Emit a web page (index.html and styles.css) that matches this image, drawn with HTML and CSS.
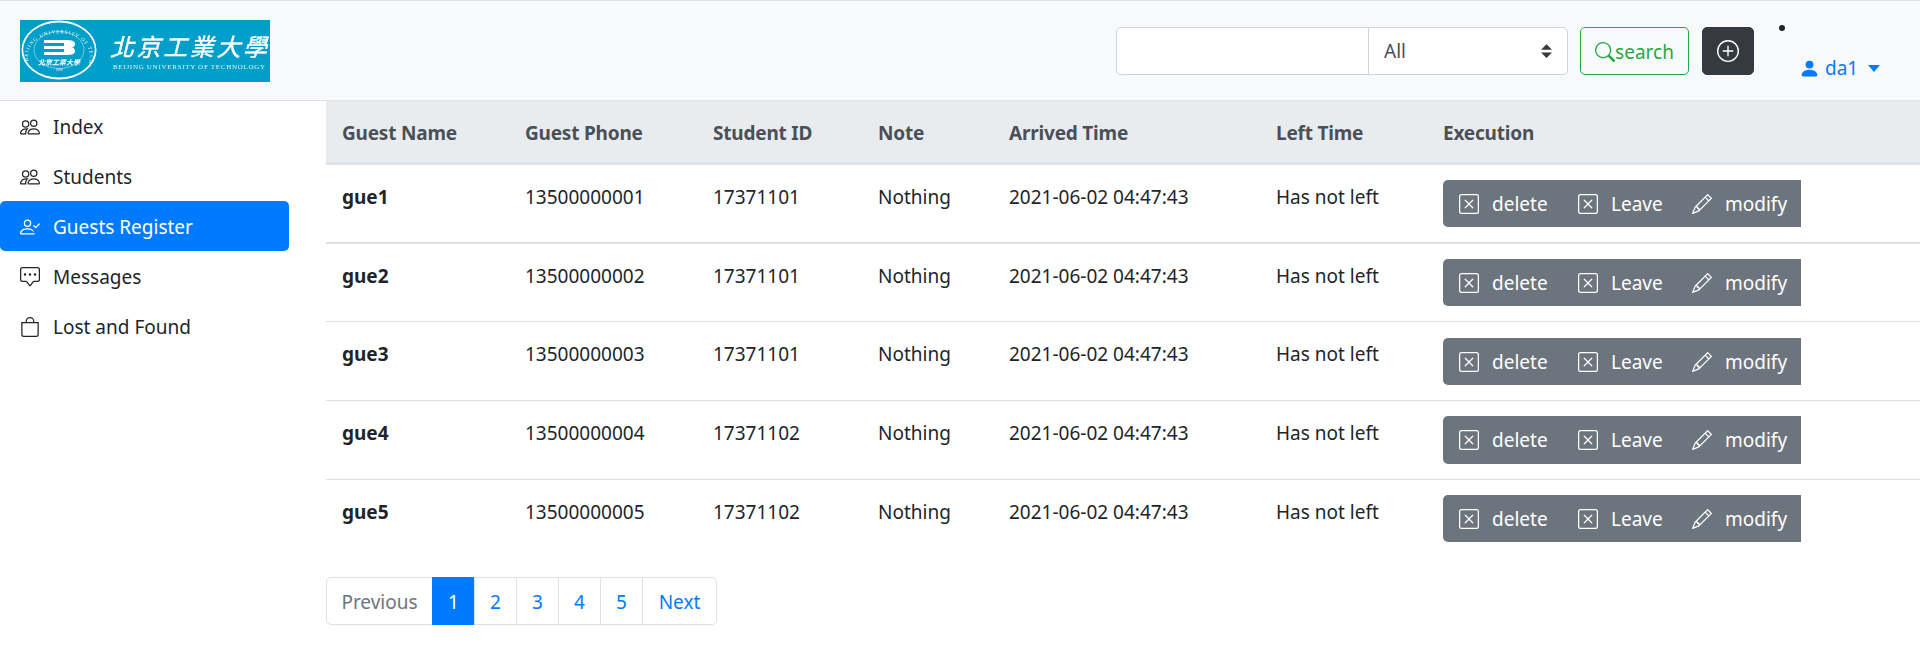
FILE: index.html
```html
<!DOCTYPE html>
<html lang="en">
<head>
<meta charset="utf-8">
<title>Guests Register</title>
<link rel="stylesheet" href="styles.css">
</head>
<body>
<svg class="sprite" aria-hidden="true">
  <symbol id="i-people" viewBox="0 0 16 16"><path d="M15 14s1 0 1-1-1-4-5-4-5 3-5 4 1 1 1 1h8zm-7.978-1A.261.261 0 0 1 7 12.996c.001-.264.167-1.03.76-1.72C8.312 10.629 9.282 10 11 10c1.717 0 2.687.63 3.24 1.276.593.69.758 1.457.76 1.72l-.008.002a.274.274 0 0 1-.014.002H7.022zM11 7a2 2 0 1 0 0-4 2 2 0 0 0 0 4zm3-2a3 3 0 1 1-6 0 3 3 0 0 1 6 0zM6.936 9.28a5.88 5.88 0 0 0-1.23-.247A7.35 7.35 0 0 0 5 9c-4 0-5 3-5 4 0 .667.333 1 1 1h4.216A2.238 2.238 0 0 1 5 13c0-1.01.377-2.042 1.09-2.904.243-.294.526-.569.846-.816zM4.92 10A5.493 5.493 0 0 0 4 13H1c0-.26.164-1.03.76-1.724.545-.636 1.492-1.256 3.16-1.275zM1.5 5.5a3 3 0 1 1 6 0 3 3 0 0 1-6 0zm3-2a2 2 0 1 0 0 4 2 2 0 0 0 0-4z"/></symbol>
  <symbol id="i-check" viewBox="0 0 16 16"><path d="M6 8a3 3 0 1 0 0-6 3 3 0 0 0 0 6zm2-3a2 2 0 1 1-4 0 2 2 0 0 1 4 0zm4 8c0 1-1 1-1 1H1s-1 0-1-1 1-4 6-4 5 3 5 4zm-1-.004c-.001-.246-.154-.986-.832-1.664C9.516 10.68 8.289 10 6 10c-2.29 0-3.516.68-4.168 1.332-.678.678-.83 1.418-.832 1.664h10z"/><path d="M15.854 5.146a.5.5 0 0 1 0 .708l-3 3a.5.5 0 0 1-.708 0l-1.5-1.5a.5.5 0 0 1 .708-.708L12.5 7.793l2.646-2.647a.5.5 0 0 1 .708 0z"/></symbol>
  <symbol id="i-chat" viewBox="0 0 16 16"><path d="M14 1a1 1 0 0 1 1 1v8a1 1 0 0 1-1 1h-2.5a2 2 0 0 0-1.6.8L8 14.333 6.1 11.8a2 2 0 0 0-1.6-.8H2a1 1 0 0 1-1-1V2a1 1 0 0 1 1-1h12zM2 0a2 2 0 0 0-2 2v8a2 2 0 0 0 2 2h2.5a1 1 0 0 1 .8.4l1.9 2.533a1 1 0 0 0 1.6 0l1.9-2.533a1 1 0 0 1 .8-.4H14a2 2 0 0 0 2-2V2a2 2 0 0 0-2-2H2z"/><path d="M5 6a1 1 0 1 1-2 0 1 1 0 0 1 2 0zm4 0a1 1 0 1 1-2 0 1 1 0 0 1 2 0zm4 0a1 1 0 1 1-2 0 1 1 0 0 1 2 0z"/></symbol>
  <symbol id="i-bag" viewBox="0 0 16 16"><path d="M8 1a2.5 2.5 0 0 1 2.5 2.5V4h-5v-.5A2.5 2.5 0 0 1 8 1zm3.5 3v-.5a3.5 3.5 0 1 0-7 0V4H1v10a2 2 0 0 0 2 2h10a2 2 0 0 0 2-2V4h-3.5zM2 5h12v9a1 1 0 0 1-1 1H3a1 1 0 0 1-1-1V5z"/></symbol>
  <symbol id="i-x" viewBox="0 0 16 16"><path d="M14 1a1 1 0 0 1 1 1v12a1 1 0 0 1-1 1H2a1 1 0 0 1-1-1V2a1 1 0 0 1 1-1h12zM2 0a2 2 0 0 0-2 2v12a2 2 0 0 0 2 2h12a2 2 0 0 0 2-2V2a2 2 0 0 0-2-2H2z"/><path d="M4.646 4.646a.5.5 0 0 1 .708 0L8 7.293l2.646-2.647a.5.5 0 0 1 .708.708L8.707 8l2.647 2.646a.5.5 0 0 1-.708.708L8 8.707l-2.646 2.647a.5.5 0 0 1-.708-.708L7.293 8 4.646 5.354a.5.5 0 0 1 0-.708z"/></symbol>
  <symbol id="i-pencil" viewBox="0 0 16 16"><path d="M12.146.146a.5.5 0 0 1 .708 0l3 3a.5.5 0 0 1 0 .708l-10 10a.5.5 0 0 1-.168.11l-5 2a.5.5 0 0 1-.65-.65l2-5a.5.5 0 0 1 .11-.168l10-10zM11.207 2.5 13.5 4.793 14.793 3.5 12.5 1.207 11.207 2.5zm1.586 3L10.5 3.207 4 9.707V10h.5a.5.5 0 0 1 .5.5v.5h.5a.5.5 0 0 1 .5.5v.5h.293l6.5-6.5zm-9.761 5.175-.106.106-1.528 3.821 3.821-1.528.106-.106A.5.5 0 0 1 5 12.5V12h-.5a.5.5 0 0 1-.5-.5V11h-.5a.5.5 0 0 1-.468-.325z"/></symbol>
  <symbol id="i-search" viewBox="0 0 16 16"><path d="M11.742 10.344a6.5 6.5 0 1 0-1.397 1.398h-.001c.03.04.062.078.098.115l3.85 3.85a1 1 0 0 0 1.415-1.414l-3.85-3.85a1.007 1.007 0 0 0-.115-.1zM12 6.5a5.5 5.5 0 1 1-11 0 5.5 5.5 0 0 1 11 0z"/></symbol>
  <symbol id="i-plus" viewBox="0 0 16 16"><path d="M8 15A7 7 0 1 1 8 1a7 7 0 0 1 0 14zm0 1A8 8 0 1 0 8 0a8 8 0 0 0 0 16z"/><path d="M8 4a.5.5 0 0 1 .5.5v3h3a.5.5 0 0 1 0 1h-3v3a.5.5 0 0 1-1 0v-3h-3a.5.5 0 0 1 0-1h3v-3A.5.5 0 0 1 8 4z"/></symbol>
  <symbol id="i-person" viewBox="0 0 16 16"><path d="M3 14s-1 0-1-1 1-4 6-4 6 3 6 4-1 1-1 1H3zm5-6a3 3 0 1 0 0-6 3 3 0 0 0 0 6z"/></symbol>
</svg>

<header class="topbar">
  <svg class="logo" viewBox="0 0 250 62" role="img" aria-label="Beijing University of Technology">
    <rect width="250" height="62" fill="#009fc9"/>
    <g class="logo-art">
      <ellipse cx="39" cy="30" rx="37.500" ry="29.500" fill="#fff"/>
      <ellipse cx="39" cy="30" rx="35.800" ry="27.500" fill="#009fc9"/>
      <ellipse cx="39" cy="30" rx="25" ry="18.500" fill="none" stroke="#bfe7f2" stroke-width=".6"/>
      <path id="seal-arc" d="M9 42 A31 23 0 1 1 69 42" fill="none"/>
      <text class="logo-seal"><textPath href="#seal-arc" startOffset="1" textLength="124">BEIJING UNIVERSITY OF TECHNOLOGY</textPath></text>
      <path d="M24 20h23q8 0 8 3.500t-3 4q3 .5 3 4t-8 3.500H24v-3h20v-3H24v-3h20v-3H24z" fill="#fff"/>
      <text class="logo-seal-cn" x="18" y="45" textLength="42">北京工業大學</text>
      <text class="logo-year" x="39" y="51" text-anchor="middle">1960</text>
      <text class="logo-cn" x="90" y="36" textLength="157">北京工業大學</text>
      <text class="logo-en" x="93" y="49" textLength="152">BEIJING UNIVERSITY OF TECHNOLOGY</text>
    </g>
  </svg>
  <form class="search-form">
    <input class="search-input" type="text" aria-label="Search">
    <select class="search-select" aria-label="Filter"><option>All</option></select>
    <button class="btn-search" type="button"><svg class="icon"><use href="#i-search"/></svg>search</button>
    <button class="btn-add" type="button" aria-label="Add"><svg class="icon-add"><use href="#i-plus"/></svg></button>
  </form>
  <div class="user-menu">
    <span class="dot"></span>
    <a class="user-link" href="#"><svg class="icon-user"><use href="#i-person"/></svg>da1<span class="caret"></span></a>
  </div>
</header>

<div class="layout">
  <nav class="sidebar">
    <a class="nav-item" href="#"><svg class="icon"><use href="#i-people"/></svg>Index</a>
    <a class="nav-item" href="#"><svg class="icon"><use href="#i-people"/></svg>Students</a>
    <a class="nav-item active" href="#"><svg class="icon"><use href="#i-check"/></svg>Guests Register</a>
    <a class="nav-item" href="#"><svg class="icon"><use href="#i-chat"/></svg>Messages</a>
    <a class="nav-item" href="#"><svg class="icon"><use href="#i-bag"/></svg>Lost and Found</a>
  </nav>
  <main class="content">
    <table class="guests">
      <colgroup>
        <col class="c-name"><col class="c-phone"><col class="c-id"><col class="c-note"><col class="c-arrived"><col class="c-left"><col>
      </colgroup>
      <thead>
        <tr><th>Guest Name</th><th>Guest Phone</th><th>Student ID</th><th>Note</th><th>Arrived Time</th><th>Left Time</th><th>Execution</th></tr>
      </thead>
      <tbody>
        <tr><th>gue1</th><td>13500000001</td><td>17371101</td><td>Nothing</td><td>2021-06-02 04:47:43</td><td>Has not left</td><td class="cell-actions"><div class="actions"><button type="button"><svg class="icon"><use href="#i-x"/></svg>delete</button><button type="button"><svg class="icon"><use href="#i-x"/></svg>Leave</button><button type="button"><svg class="icon"><use href="#i-pencil"/></svg>modify</button></div></td></tr>
        <tr><th>gue2</th><td>13500000002</td><td>17371101</td><td>Nothing</td><td>2021-06-02 04:47:43</td><td>Has not left</td><td class="cell-actions"><div class="actions"><button type="button"><svg class="icon"><use href="#i-x"/></svg>delete</button><button type="button"><svg class="icon"><use href="#i-x"/></svg>Leave</button><button type="button"><svg class="icon"><use href="#i-pencil"/></svg>modify</button></div></td></tr>
        <tr><th>gue3</th><td>13500000003</td><td>17371101</td><td>Nothing</td><td>2021-06-02 04:47:43</td><td>Has not left</td><td class="cell-actions"><div class="actions"><button type="button"><svg class="icon"><use href="#i-x"/></svg>delete</button><button type="button"><svg class="icon"><use href="#i-x"/></svg>Leave</button><button type="button"><svg class="icon"><use href="#i-pencil"/></svg>modify</button></div></td></tr>
        <tr><th>gue4</th><td>13500000004</td><td>17371102</td><td>Nothing</td><td>2021-06-02 04:47:43</td><td>Has not left</td><td class="cell-actions"><div class="actions"><button type="button"><svg class="icon"><use href="#i-x"/></svg>delete</button><button type="button"><svg class="icon"><use href="#i-x"/></svg>Leave</button><button type="button"><svg class="icon"><use href="#i-pencil"/></svg>modify</button></div></td></tr>
        <tr><th>gue5</th><td>13500000005</td><td>17371102</td><td>Nothing</td><td>2021-06-02 04:47:43</td><td>Has not left</td><td class="cell-actions"><div class="actions"><button type="button"><svg class="icon"><use href="#i-x"/></svg>delete</button><button type="button"><svg class="icon"><use href="#i-x"/></svg>Leave</button><button type="button"><svg class="icon"><use href="#i-pencil"/></svg>modify</button></div></td></tr>
      </tbody>
    </table>
    <ul class="pagination">
      <li class="page prev"><a href="#">Previous</a></li>
      <li class="page current"><a href="#">1</a></li>
      <li class="page"><a href="#">2</a></li>
      <li class="page"><a href="#">3</a></li>
      <li class="page"><a href="#">4</a></li>
      <li class="page"><a href="#">5</a></li>
      <li class="page next"><a href="#">Next</a></li>
    </ul>
  </main>
</div>
</body>
</html>
```

FILE: styles.css
```css
* { box-sizing: border-box; }
html, body { margin: 0; padding: 0; }
body {
  background: #fff;
  color: #212529;
  font-family: "Noto Sans", "Open Sans", sans-serif;
  font-size: 19px;
  line-height: 30px;
  overflow: hidden;
}
a { text-decoration: none; color: inherit; }
button, input, select { font: inherit; }
.sprite { display: none; }
.icon { width: 20px; height: 20px; fill: currentColor; flex: none; }
.icon-add { width: 22px; height: 22px; fill: currentColor; flex: none; }

/* top bar */
.topbar {
  display: flex;
  align-items: flex-start;
  height: 101px;
  padding: 19px 0 0 20px;
  background: #f8f9fa;
  border-top: 1px solid #dee2e6;
  border-bottom: 1px solid #dee2e6;
}
.logo { width: 250px; height: 62px; display: block; }
.logo-art { filter: blur(.35px); }
.logo-seal { font: 5px "Liberation Serif", serif; fill: #fff; }
.logo-seal-cn { font: italic 700 7px "Noto Sans CJK TC", sans-serif; fill: #fff; }
.logo-year { font: 3.500px "Liberation Serif", serif; fill: #fff; }
.logo-cn { font: italic 400 24px "Noto Sans CJK TC", sans-serif; fill: #fff; stroke: #fff; stroke-width: .4px; }
.logo-en { font: 7px "Liberation Serif", serif; fill: #e4f5fa; }

.search-form { display: flex; margin: 7px 0 0 846px; }
.search-input {
  width: 253px;
  height: 48px;
  background: #fff;
  border: 1px solid #ced4da;
  border-radius: 5px 0 0 5px;
}
.search-select {
  width: 200px;
  height: 48px;
  margin-left: -1px;
  padding: 0 36px 0 15px;
  color: #495057;
  appearance: none;
  background: #fff url("data:image/svg+xml,%3csvg xmlns='http://www.w3.org/2000/svg' width='12' height='16' viewBox='0 0 4 5'%3e%3cpath fill='%23343a40' d='M2 0 0 2h4zm0 5L0 3h4z'/%3e%3c/svg%3e") no-repeat right 15px center;
  background-size: 11px 16px;
  border: 1px solid #ced4da;
  border-radius: 0 5px 5px 0;
}
.btn-search {
  display: flex;
  align-items: center;
  justify-content: center;
  width: 109px;
  height: 48px;
  margin-left: 12px;
  padding: 1px 0 0;
  color: #28a745;
  background: transparent;
  border: 1px solid #28a745;
  border-radius: 5px;
}
.btn-add {
  display: flex;
  align-items: center;
  justify-content: center;
  width: 52px;
  height: 48px;
  margin-left: 13px;
  padding: 0;
  color: #fff;
  background: #343a40;
  border: 1px solid #343a40;
  border-radius: 5px;
}

.user-menu { margin: 5px 0 0 25px; width: 112px; }
.dot { display: block; width: 6px; height: 6px; border-radius: 50%; background: #212529; }
.user-link {
  display: flex;
  align-items: center;
  margin: 22px 0 0 20px;
  color: #007bff;
}
.icon-user { width: 21px; height: 21px; margin-right: 5px; fill: currentColor; flex: none; }
.caret {
  margin-left: 10px;
  border-top: 7px solid currentColor;
  border-left: 6px solid transparent;
  border-right: 6px solid transparent;
}

/* main layout */
.layout { display: grid; grid-template-columns: 326px 1fr; }
.sidebar { display: flex; flex-direction: column; width: 289px; }
.nav-item {
  display: flex;
  align-items: center;
  gap: 13px;
  height: 50px;
  padding: 2px 0 0 20px;
  color: #212529;
  border-radius: 5px;
}
.nav-item.active { background: #007bff; color: #fff; }

/* table */
.guests { width: 100%; table-layout: fixed; border-collapse: separate; border-spacing: 0; }
.c-name { width: 183px; }
.c-phone { width: 188px; }
.c-id { width: 165px; }
.c-note { width: 131px; }
.c-arrived { width: 267px; }
.c-left { width: 167px; }
.guests th, .guests td {
  padding: 17px 16px 0;
  text-align: left;
  vertical-align: top;
  border-bottom: 1px solid #dee2e6;
}
.guests thead th {
  padding: 17px 16px 14px;
  color: #495057;
  background: #e9ecef;
  font-weight: 700;
  letter-spacing: -.2px;
  border-bottom: 3px solid #dee2e6;
}
.guests tbody th { font-weight: 700; color: #212529; }
.guests td { font-weight: 400; }
.guests td.cell-actions { padding: 15px 16px; }
.guests tbody tr:first-child > * { border-bottom-width: 2px; }
.guests tbody tr:nth-child(3) td.cell-actions { padding-top: 16px; }
.guests tbody tr:last-child > * { border-bottom: 0; }
.actions { display: flex; }
.actions button {
  display: flex;
  align-items: center;
  gap: 13px;
  height: 47px;
  padding: 0 0 0 16px;
  color: #fff;
  background: #6c757d;
  border: 0;
}
.guests tbody tr:nth-child(4) .actions button { height: 48px; }
.actions button:nth-child(1) { width: 119px; border-radius: 5px 0 0 5px; }
.actions button:nth-child(2) { width: 114px; }
.actions button:nth-child(3) { width: 125px; }

/* pagination */
.pagination { display: flex; list-style: none; margin: 20px 0 0; padding: 0; }
.page a {
  display: flex;
  align-items: center;
  justify-content: center;
  width: 43px;
  height: 48px;
  margin-left: -1px;
  padding-top: 1px;
  color: #007bff;
  background: #fff;
  border: 1px solid #dee2e6;
}
.page.prev a { width: 107px; margin-left: 0; color: #6c757d; border-radius: 5px 0 0 5px; }
.page.current a { color: #fff; background: #007bff; border-color: #007bff; }
.page.next a { width: 75px; border-radius: 0 5px 5px 0; }
```
